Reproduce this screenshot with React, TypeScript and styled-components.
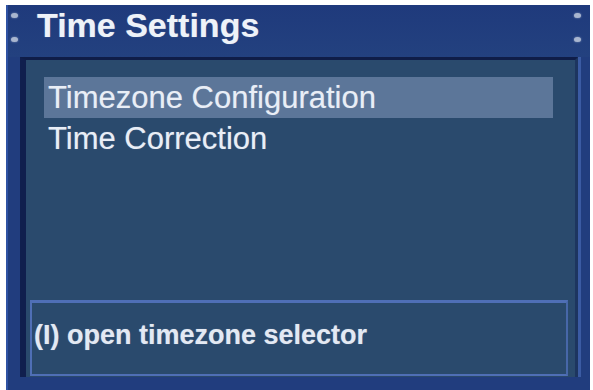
import styled, { createGlobalStyle } from "styled-components";

const Global = createGlobalStyle`
  html, body {
    margin: 0;
    padding: 0;
    background: #ffffff;
  }
  body {
    font-family: "Liberation Sans", Arial, sans-serif;
  }
`;

const Frame = styled.div`
  margin: 5px 3px 0 6px;
  height: 385px;
  background: #213d7e;
  border-left: 2px solid #2f52a3;
  display: flex;
  flex-direction: column;
  box-sizing: border-box;
`;

const Header = styled.header`
  height: 52px;
  display: flex;
  align-items: flex-start;
  padding: 0 9px 0 3px;
  background: linear-gradient(#1f3a7c, #23417f);
`;

const DotColumn = styled.div`
  display: flex;
  flex-direction: column;
  gap: 19px;
  padding-top: 8px;
`;

const Dot = styled.span`
  width: 7px;
  height: 5px;
  border-radius: 50%;
  background: #a9b6cf;
  box-shadow: 0 0 2px #8fa0c4;
`;

const Title = styled.h1`
  margin: 3px 0 0 19px;
  font-size: 34px;
  line-height: 34px;
  font-weight: 700;
  color: #eef2f8;
  text-shadow: 0 0 1px rgba(220, 230, 245, 0.5);
  flex: 1;
`;

const Panel = styled.section`
  flex: 1;
  margin: 0 12px 13px 12px;
  background: #2a4a6d;
  border-left: 6px solid #101f4e;
  border-top: 3px solid #0f1d48;
  border-right: 3px solid #1d355f;
  box-shadow: 3px 0 0 #3b5ba3;
  display: flex;
  flex-direction: column;
`;

const Menu = styled.ul`
  list-style: none;
  margin: 0;
  padding: 17px 22px 0 18px;
`;

const Item = styled.li<{ $active?: boolean }>`
  height: 41px;
  line-height: 41px;
  padding-left: 4px;
  font-size: 31px;
  color: #e9eef6;
  text-shadow: 0 0 1px rgba(220, 230, 245, 0.45);
  background: ${p => (p.$active ? "#5c7699" : "transparent")};
`;

const HelpBox = styled.div`
  margin: auto 7px 1px 4px;
  height: 76px;
  box-sizing: border-box;
  border: 2px solid #4f6fb6;
  border-top-width: 3px;
  border-right-color: #4767a8;
  display: flex;
  align-items: center;
  padding: 0 0 6px 2px;
`;

const HelpText = styled.span`
  font-size: 27px;
  line-height: 27px;
  font-weight: 700;
  color: #e3e9f3;
  text-shadow: 0 0 1px rgba(220, 230, 245, 0.45);
`;

export default function App() {
  return (
    <>
      <Global />
      <Frame>
        <Header>
          <DotColumn>
            <Dot />
            <Dot />
          </DotColumn>
          <Title>Time Settings</Title>
          <DotColumn>
            <Dot />
            <Dot />
          </DotColumn>
        </Header>
        <Panel>
          <Menu>
            <Item $active>Timezone Configuration</Item>
            <Item>Time Correction</Item>
          </Menu>
          <HelpBox>
            <HelpText>(I) open timezone selector</HelpText>
          </HelpBox>
        </Panel>
      </Frame>
    </>
  );
}
